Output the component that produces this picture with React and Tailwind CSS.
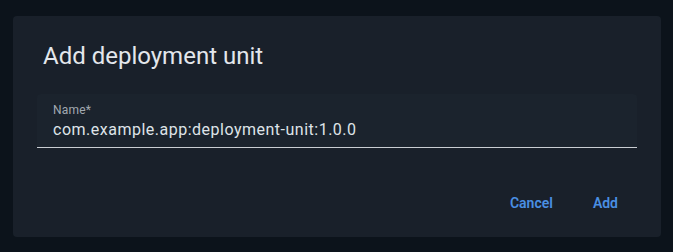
import React from 'react';

function AddDeploymentUnitDialog() {
  return (
    <div className="w-[648px] h-[221px] ml-[13px] mt-4 rounded bg-[#19202a] flex flex-col">
      <h2 className="pt-6 px-[30px] text-2xl leading-8 font-normal text-[#e3e7ec]">Add deployment unit</h2>
      <div className="px-6 mt-[22px]">
        <div className="h-[54px] bg-[#1b232d] rounded-t border-b border-[#c9cdd2] px-4 pt-[8px]">
          <p className="text-xs leading-4 text-[#a2a9b1] tracking-[0.2px]">Name*</p>
          <p className="text-base leading-6 text-[#dfe3e8] tracking-[0.5px]">com.example.app:deployment-unit:1.0.0</p>
        </div>
      </div>
      <div className="flex justify-end items-center gap-[40px] mt-[45px] pr-[43px]">
        <button className="text-sm font-semibold text-[#4a8fe3]">Cancel</button>
        <button className="text-sm font-semibold text-[#4a8fe3]">Add</button>
      </div>
    </div>
  );
}

export default function App() {
  return (
    <div className="w-full h-[252px] bg-[#0c131b] overflow-hidden" style={{ fontFamily: 'Roboto, "Liberation Sans", sans-serif' }}>
      <AddDeploymentUnitDialog />
    </div>
  );
}
